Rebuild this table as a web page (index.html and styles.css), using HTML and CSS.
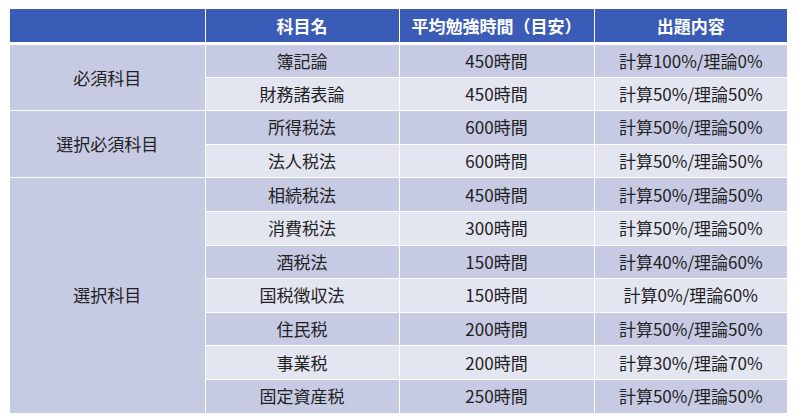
FILE: index.html
```html
<!DOCTYPE html>
<html lang="ja">
<head>
<meta charset="utf-8">
<link rel="stylesheet" href="styles.css">
</head>
<body>
<table class="tbl">
  <colgroup>
    <col class="c1"><col class="c2"><col class="c3"><col class="c4">
  </colgroup>
  <thead>
    <tr class="head">
      <th></th><th>科目名</th><th>平均勉強時間（目安）</th><th>出題内容</th>
    </tr>
  </thead>
  <tbody>
    <tr class="dark"><td class="cat" rowspan="2">必須科目</td><td>簿記論</td><td>450時間</td><td>計算100%/理論0%</td></tr>
    <tr class="light"><td>財務諸表論</td><td>450時間</td><td>計算50%/理論50%</td></tr>
    <tr class="dark"><td class="cat" rowspan="2">選択必須科目</td><td>所得税法</td><td>600時間</td><td>計算50%/理論50%</td></tr>
    <tr class="light"><td>法人税法</td><td>600時間</td><td>計算50%/理論50%</td></tr>
    <tr class="dark"><td class="cat" rowspan="7">選択科目</td><td>相続税法</td><td>450時間</td><td>計算50%/理論50%</td></tr>
    <tr class="light"><td>消費税法</td><td>300時間</td><td>計算50%/理論50%</td></tr>
    <tr class="dark"><td>酒税法</td><td>150時間</td><td>計算40%/理論60%</td></tr>
    <tr class="light"><td>国税徴収法</td><td>150時間</td><td>計算0%/理論60%</td></tr>
    <tr class="dark"><td>住民税</td><td>200時間</td><td>計算50%/理論50%</td></tr>
    <tr class="light"><td>事業税</td><td>200時間</td><td>計算30%/理論70%</td></tr>
    <tr class="dark"><td>固定資産税</td><td>250時間</td><td>計算50%/理論50%</td></tr>
  </tbody>
</table>
</body>
</html>
```
FILE: styles.css
```css
html, body {
  margin: 0;
  padding: 0;
  background: #ffffff;
}
body {
  padding: 9px 0 0 10px;
  font-family: "Noto Sans CJK JP", "Noto Sans", sans-serif;
  color: #222222;
}
.tbl {
  border-collapse: collapse;
  table-layout: fixed;
  width: 777px;
  font-size: 17px;
}
.c1 { width: 195px; }
.c2 { width: 194px; }
.c3 { width: 195px; }
.c4 { width: 193px; }
.tbl th, .tbl td {
  padding: 0;
  text-align: center;
  vertical-align: middle;
  border: 1px solid #ffffff;
  line-height: 20px;
}
.tbl tr:first-child th { border-top: none; }
.tbl th:first-child, .tbl td.cat { border-left: none; }
.tbl th:last-child, .tbl td:last-child { border-right: none; }
.head th {
  background: #3a5bb6;
  color: #ffffff;
  font-weight: 700;
  height: 33px;
  border-bottom: 3px solid #ffffff;
}
.tbl tbody tr { height: 33.6px; }
.tbl tbody tr:last-child td { border-bottom: none; }
.dark td { background: #c6cae3; }
.light td { background: #e3e5f1; }
.tbl td.cat { background: #c6cae3; }
```
